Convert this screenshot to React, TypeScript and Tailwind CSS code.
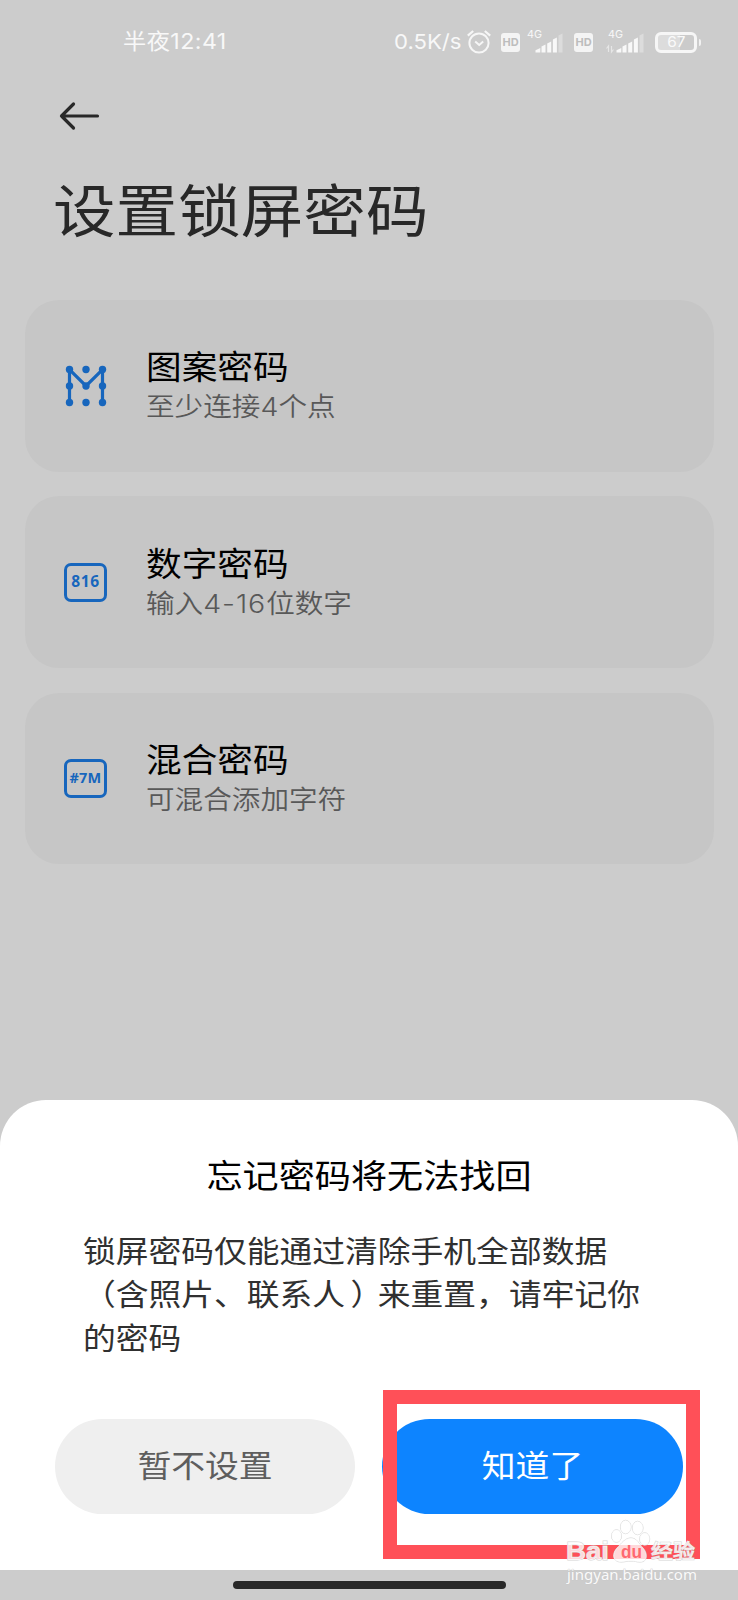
import type { ReactNode } from "react";

const BLUE = "#1766bd";

function AlarmIcon() {
  return (
    <svg width="26" height="26" viewBox="0 0 26 26" fill="none" stroke="#f6f6f6" strokeWidth="2">
      <circle cx="13" cy="14" r="9.6" />
      <path d="M1.8 6.6 7.2 2M24.2 6.6 18.8 2" strokeWidth="2.2" />
      <path d="m9.2 12.6 4 3.4 4-3.4" />
    </svg>
  );
}

function HdBadge() {
  return (
    <span className="flex h-[19px] w-[19px] items-center justify-center rounded-[3px] bg-[#f4f4f4] pt-px font-['Inter','Liberation_Sans',sans-serif] text-[11px] font-bold leading-none tracking-[-0.2px] text-[#bdbdbd]">
      HD
    </span>
  );
}

function Signal({ arrows = false }: { arrows?: boolean }) {
  return (
    <svg width="40" height="26" viewBox="0 0 40 26">
      <text x="2" y="10" fontSize="10.5" fill="#f8f8f8" fontFamily="Inter, sans-serif" textLength="15" lengthAdjust="spacingAndGlyphs">
        4G
      </text>
      {arrows && (
        <path d="M2.500 24v-6l-2 2.500M5.500 18v6l2-2.500" stroke="#e6e6e6" strokeWidth="1.200" fill="none" />
      )}
      <g fill="#f8f8f8">
        <path d="M10.500 24.500v-2.300l4.800-2.200v4.500z" />
        <path d="M16.500 24.500v-6l4-2v8z" />
        <path d="M22.200 24.500v-9l4-2v11z" />
        <path d="M27.900 24.500v-13l4-2v15z" />
        <path d="M33.500 24.500v-17l4-2v19z" fill="#dcdcdc" />
      </g>
    </svg>
  );
}

function Battery() {
  return (
    <span className="flex items-center">
      <span className="flex h-[21px] w-[42px] items-center justify-center rounded-[6px] border-[3px] border-[#f6f6f6] bg-[linear-gradient(90deg,#dcdcdc_62%,#cbcbcb_62%)] font-['Inter',sans-serif] text-[14px] leading-none text-[#fafafa]">
        <span className="scale-x-110">67</span>
      </span>
      <span className="ml-[2px] h-[7px] w-[2px] rounded-r bg-[#f2f2f2]" />
    </span>
  );
}

function StatusBar() {
  return (
    <div className="flex h-[84px] items-center pl-[123px] text-[#f8f8f8]">
      <span className="w-[271px] whitespace-nowrap text-[21.5px] leading-none">
        <span className="inline-block origin-left scale-x-[1.08] tracking-[0.4px]">半夜12:41</span>
      </span>
      <span className="w-[72px] whitespace-nowrap pt-px text-[20.500px] leading-none">
        <span className="inline-block origin-left scale-x-[1.08]">0.5K/s</span>
      </span>
      <span className="w-[35px]">
        <AlarmIcon />
      </span>
      <HdBadge />
      <span className="ml-[5px] mt-[-2px] w-[49px]">
        <Signal />
      </span>
      <HdBadge />
      <span className="ml-[13px] mt-[-2px] w-[49px]">
        <Signal arrows />
      </span>
      <Battery />
    </div>
  );
}

function BackArrow() {
  return (
    <svg width="42" height="30" viewBox="0 0 42 30" fill="none" stroke="#282828" strokeWidth="3.200" strokeLinecap="round" strokeLinejoin="round">
      <path d="M39.500 15H3.500M15.500 3 3.500 15l12 12" />
    </svg>
  );
}

function PatternIcon() {
  const dots = [
    [4.500, 4.500], [21, 4.500], [37.500, 4.500],
    [4.500, 21], [21, 21], [37.500, 21],
    [4.500, 37.500], [21, 37.500], [37.500, 37.500],
  ];
  return (
    <svg width="42" height="42" viewBox="0 0 42 42">
      <path d="M4.500 37.500v-33L21 21 37.500 4.500v33" fill="none" stroke={BLUE} strokeWidth="3.200" />
      {dots.map(([x, y]) => (
        <circle key={`${x}-${y}`} cx={x} cy={y} r="3.700" fill={BLUE} />
      ))}
    </svg>
  );
}

function KeyIcon({ label, size }: { label: string; size: string }) {
  return (
    <span className={`flex h-[39px] w-[43px] items-center justify-center rounded-[7px] border-[3px] border-[#1766bd] leading-none text-[#1766bd] ${size}`}>
      {label}
    </span>
  );
}

function Option({ icon, title, hint }: { icon: ReactNode; title: string; hint: ReactNode }) {
  return (
    <button className="flex h-[171.600px] w-full items-center rounded-[34px] bg-[#c6c6c6] text-left">
      <span className="ml-[38.500px] flex w-[45px] justify-center">{icon}</span>
      <span className="ml-[37.500px] flex flex-col whitespace-nowrap pb-[1px]">
        <span className="h-[43px] origin-left scale-x-[1.08] text-[33px] leading-[43px] text-black">{title}</span>
        <span className="h-[35px] origin-left scale-x-[1.1] text-[26px] font-[350] leading-[35px] text-[#585858]">{hint}</span>
      </span>
    </button>
  );
}

function Watermark() {
  return (
    <div className="absolute left-[564px] top-[1516px]">
      <svg width="140" height="72" viewBox="0 0 140 72">
        <g fill="#fff" fillOpacity="0.78" stroke="#d6d6d6" strokeWidth="1" paintOrder="stroke">
          <ellipse cx="52.500" cy="20" rx="5" ry="6.200" />
          <ellipse cx="61.700" cy="11" rx="5.300" ry="6.700" />
          <ellipse cx="73.700" cy="12" rx="5.300" ry="6.700" />
          <ellipse cx="80.700" cy="23" rx="5" ry="6.200" />
          <path d="M67 22c6 0 8 6 12 10s6 14-3 14c-4 0-5-1-9-1s-6 1-10 1c-9 0-9-9-4-14s8-10 14-10z" />
          <text x="2" y="44" fontSize="25" fontWeight="700" fontFamily="Liberation Sans, sans-serif" textLength="43" lengthAdjust="spacingAndGlyphs">Bai</text>
          <text x="87" y="42.500" fontSize="20.500" fontWeight="500" fontFamily="Noto Sans CJK SC, sans-serif" textLength="44" lengthAdjust="spacingAndGlyphs">经验</text>
        </g>
        <text x="57" y="41.500" fontSize="18" fontWeight="700" fontFamily="Liberation Sans, sans-serif" fill="#ff6870" textLength="21" lengthAdjust="spacingAndGlyphs">du</text>
        <text x="3" y="64" fontSize="13.700" fontFamily="Noto Sans, sans-serif" fill="#fafafa" stroke="#c6c6c6" strokeWidth="0.6" paintOrder="stroke" textLength="130" lengthAdjust="spacingAndGlyphs">
          jingyan.baidu.com
        </text>
      </svg>
    </div>
  );
}

function Sheet() {
  return (
    <section className="flex h-[470px] flex-col rounded-t-[46px] bg-white pt-[51px]">
      <h2 className="h-[50px] scale-x-[1.095] text-center text-[33px] leading-[50px] text-black">忘记密码将无法找回</h2>
      <div className="mt-[29px] pl-[83px] text-[30px] leading-[43.300px] text-[#303030]">
        <p className="origin-left scale-x-[1.092] whitespace-nowrap">锁屏密码仅能通过清除手机全部数据</p>
        <p className="origin-left scale-x-[1.092] whitespace-nowrap">
          （含照片、联系人<span className="ml-[5px] mr-[10px] [font-feature-settings:'halt']">）</span>来重置，请牢记你
        </p>
        <p className="origin-left scale-x-[1.092] whitespace-nowrap">的密码</p>
      </div>
      <div className="mt-[59.500px] flex gap-[27px] pl-[54.500px]">
        <button className="h-[95px] w-[300px] rounded-full bg-[#efefef] pb-[2px] text-[31px] leading-none text-[#5e5e5e]">
          <span className="inline-block scale-x-[1.09]">暂不设置</span>
        </button>
        <button className="h-[95px] w-[301.500px] rounded-full bg-[#0d84ff] pb-[2px] text-[31px] leading-none text-white">
          <span className="inline-block scale-x-[1.09]">知道了</span>
        </button>
      </div>
    </section>
  );
}

export default function App() {
  return (
    <main className="relative flex h-[1600px] w-[738px] flex-col overflow-hidden bg-[#cccccc] font-['Inter','Noto_Sans_CJK_SC',sans-serif]">
      <StatusBar />
      <header className="h-[216px] pl-[58px] pt-[17px]">
        <BackArrow />
        <h1 className="ml-[-5px] mt-[41px] h-[80px] origin-left scale-x-[1.098] whitespace-nowrap text-[57px] leading-[80px] text-[#282828]">
          设置锁屏密码
        </h1>
      </header>
      <div className="flex h-[800px] flex-col gap-[24.800px] px-[24.500px]">
        <Option icon={<PatternIcon />} title="图案密码" hint="至少连接4个点" />
        <Option
          icon={<KeyIcon label="816" size="font-['Open_Sans',sans-serif] font-bold text-[15.500px] tracking-[0.6px]" />}
          title="数字密码"
          hint={<>输入<span className="tracking-[0.8px]">4-16</span>位数字</>}
        />
        <Option
          icon={<KeyIcon label="#7M" size="font-['Open_Sans',sans-serif] font-bold text-[14.500px] tracking-[0.2px]" />}
          title="混合密码"
          hint="可混合添加字符"
        />
      </div>
      <Sheet />
      <div className="flex h-[30px] justify-center pt-[11px]">
        <span className="h-[8px] w-[273px] rounded-full bg-[#282828]" />
      </div>
      <div className="absolute left-[383px] top-[1390px] h-[169px] w-[317px] border-[14px] border-[#ff5058]" />
      <Watermark />
    </main>
  );
}
